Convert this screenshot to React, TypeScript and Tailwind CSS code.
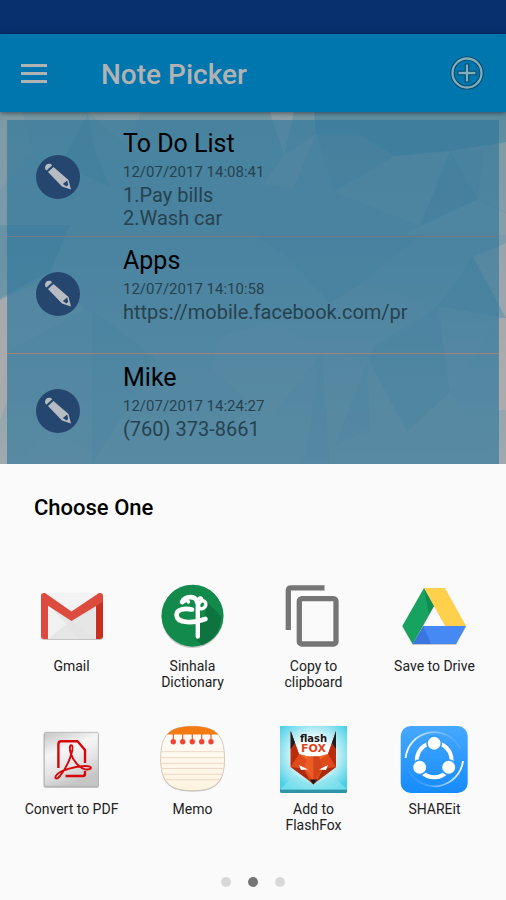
import type { ReactNode } from "react";

const notes = [
  { title: "To Do List", date: "12/07/2017 14:08:41", lines: ["1.Pay bills", "2.Wash car"] },
  { title: "Apps", date: "12/07/2017 14:10:58", lines: ["https://mobile.facebook.com/pr"] },
  { title: "Mike", date: "12/07/2017 14:24:27", lines: ["(760) 373-8661"] },
];

function Icon({ children }: { children: ReactNode }) {
  return (
    <svg viewBox="1 0 68 68" className="size-17 overflow-visible" aria-hidden="true">
      {children}
    </svg>
  );
}

function GmailIcon() {
  return (
    <Icon>
      <rect x="4" y="12" width="62" height="46" rx="3" fill="#000" opacity=".22" />
      <rect x="4" y="11" width="62" height="46" rx="3" fill="#ececec" />
      <path d="M11 57 34.5 38.5 59 57Z" fill="#e6e6e6" />
      <path d="M11 57 31 41 10 20V57Z" fill="#f1f1f1" />
      <path d="M11 22 42 57H59V20L35 39Z" fill="#e2e2e2" opacity=".55" />
      <path d="M8 11H62L34.5 30Z" fill="#f3f3f3" />
      <path d="M4 16H11V57H7Q4 57 4 54Z" fill="#de4a3f" />
      <path d="M59 16H66V54Q66 57 63 57H59Z" fill="#c9301f" />
      <path d="M4 14Q4 11 7 11H8L34.500 29.500 62 11H63Q66 11 66 14V18Q66 20 64 21L34.500 39 6 20.500Q4 19 4 17Z" fill="#dd4b3f" />
    </Icon>
  );
}

function SinhalaIcon() {
  return (
    <Icon>
      <circle cx="34.500" cy="35" r="31" fill="#000" opacity=".2" />
      <circle cx="34.500" cy="33.700" r="31" fill="#128a4b" />
      <path d="M49 20 63 34A31 31 0 0 1 44 63.500L38 57 40 42 29 42 47 36Z" fill="#0b6b3a" opacity=".7" />
      <g fill="none" stroke="#fff" strokeLinecap="round" strokeLinejoin="round">
        <path d="M24 20C27 14 38 13 39 20" strokeWidth="4.600" />
        <path d="M24.500 20.500C28 18 30 18 30.500 20" strokeWidth="3.400" />
        <path d="M34 27.500C27 26 18.500 27 18.500 33 19 42 36 41.500 47.500 37" strokeWidth="4.600" />
        <path d="M39.800 54.500V22" strokeWidth="4.400" />
        <path d="M40.500 25C40 19 45.500 17 47.500 20.500 49 25.500 44 28 41 26" strokeWidth="3.400" />
        <path d="M39.500 18.500C41 15 44 15 44 18" strokeWidth="3" />
      </g>
    </Icon>
  );
}

function CopyIcon() {
  return (
    <Icon>
      <g fill="none" stroke="#757575" strokeWidth="5.300">
        <path d="M45.500 5.800H12Q9.300 5.800 9.300 8.500V48" />
        <rect x="20.300" y="16.700" width="36.700" height="45.300" rx="2.600" />
      </g>
    </Icon>
  );
}

function DriveIcon() {
  return (
    <Icon>
      <path d="M12.700 63 2.300 45 24 7H45L66 45 56 63Z" fill="#000" opacity=".2" />
      <path d="M34 24 45.300 44H23.300Z" fill="#fafafa" />
      <path d="M24 6 34 24 12.700 62 2.300 44Z" fill="#17a260" />
      <path d="M24 6 34 24 29 32Z" fill="#0c7d48" opacity=".6" />
      <path d="M24 6H45L66 44H45.300Z" fill="#ffd04c" />
      <path d="M23.300 44H66L56 62H12.700Z" fill="#4688f4" />
      <path d="M23.300 44 31 62H12.700Z" fill="#3366cc" opacity=".55" />
    </Icon>
  );
}

function PdfIcon() {
  return (
    <Icon>
      <defs>
        <linearGradient id="pdf" x1="0" y1="0" x2=".4" y2="1">
          <stop offset="0" stopColor="#c4c4c4" />
          <stop offset=".4" stopColor="#f6f6f6" />
          <stop offset=".7" stopColor="#e4e4e4" />
          <stop offset="1" stopColor="#c6c6c6" />
        </linearGradient>
      </defs>
      <rect x="6.500" y="8" width="55.500" height="55" rx="2" fill="#000" opacity=".22" />
      <rect x="7.300" y="7.300" width="54" height="54" rx="1.500" fill="url(#pdf)" stroke="#aaa" strokeWidth=".7" />
      <g fill="none" stroke="#d8060b" strokeLinejoin="round">
        <path d="M21.400 43V19Q21.400 16.300 24 16.300H40.500L48 25V38M28.500 51H46Q48 51 48 49V46" strokeWidth="2.400" />
        <path d="M34 29C31.500 22 33.500 19 35 20.500 37 23 32 40 23 51 19 55.500 17 53 19.500 50 23 45.500 38 41 48 41 55 41 55.500 44 51 44.500 44 45 36 36 34 29Z" strokeWidth="1.900" />
      </g>
    </Icon>
  );
}

function MemoIcon() {
  const shape = "M34.500 1.300C58 1.300 66.500 10 66.500 33.500S58 65.700 34.500 65.700 2.700 57 2.700 33.500 11 1.300 34.500 1.300Z";
  return (
    <Icon>
      <defs>
        <clipPath id="memo"><path d={shape} /></clipPath>
        <linearGradient id="memoPaper" x2="0" y2="1">
          <stop stopColor="#fffdfa" />
          <stop offset="1" stopColor="#fdf3df" />
        </linearGradient>
      </defs>
      <path d={shape} transform="translate(0 1)" fill="#000" opacity=".2" />
      <path d={shape} fill="url(#memoPaper)" stroke="#c9c0b4" strokeWidth=".8" />
      <g clipPath="url(#memo)">
        <path d="M0 0H68V9.600H0Z" fill="#f47a12" />
        <path d="M0 26.700H68M0 32.700H68M0 38.300H68M0 43.500H68M0 49.300H68M0 54.700H68" stroke="#eed8c5" strokeWidth="1" />
      </g>
      {[15.3, 24.7, 34.3, 43.7, 53].map((x) => (
        <g key={x}>
          <path d={`M${x} 9V15`} stroke="#ee5c22" strokeWidth="1.200" />
          <circle cx={x} cy="16.700" r="2.700" fill="#f04438" />
        </g>
      ))}
    </Icon>
  );
}

function FoxIcon() {
  return (
    <Icon>
      <defs>
        <radialGradient id="foxSky" cx=".5" cy=".45" r=".65">
          <stop offset=".35" stopColor="#fff" />
          <stop offset="1" stopColor="#48d0e6" />
        </radialGradient>
      </defs>
      <rect x="1" y="1" width="67" height="67" rx="1.500" fill="#2e94a6" />
      <rect x="1" y="1" width="67" height="63.500" rx="1.500" fill="url(#foxSky)" />
      <path d="M1 64.500 16 50 34 61 53 50 68 64.500Z" fill="#8be4ef" opacity=".6" />
      <path d="M11.700 6 20 29 29 31.500H40L49 29 57 6V42L40 55 34.300 59.500 29 55 11.700 42Z" fill="#e04a1c" />
      <path d="M11.700 6 20 29 11.700 42ZM57 6 49 29 57 42Z" fill="#b92d0c" />
      <path d="M11.700 6 16 18 11.700 24ZM57 6 53 18 57 24Z" fill="#17202a" />
      <path d="M20 29 34.300 39 29 31.500ZM49 29 34.300 39 40 31.500Z" fill="#f26b2b" />
      <path d="M29 31.500H40L44 43 34.300 55 25 43Z" fill="#ee5c25" />
      <path d="M34.300 31.500V56L44 43 40 31.500Z" fill="#d2451a" />
      <path d="M11.700 42 25 44 31 56ZM57 42 44 44 38 56Z" fill="#a92b10" />
      <path d="M20 40 29 44.500 22 45ZM49 40 40 44.500 47 45Z" fill="#fff" />
      <path d="M30.500 54.500H38.500L34.300 59.500Z" fill="#17191c" />
      <text textAnchor="middle" fontWeight="700" fontFamily="'DejaVu Sans', sans-serif">
        <tspan x="34.500" y="16.500" fontSize="10" fill="#171717">flash</tspan>
        <tspan x="34.500" y="26.700" fontSize="11" fill="#df431c">FOX</tspan>
      </text>
    </Icon>
  );
}

function ShareIcon() {
  return (
    <Icon>
      <defs>
        <linearGradient id="share" x2="0" y2="1">
          <stop stopColor="#46a8ff" />
          <stop offset="1" stopColor="#168bfb" />
        </linearGradient>
        <linearGradient id="arcTop" x1="0" y1=".6" x2="1" y2=".3">
          <stop stopColor="#fff" />
          <stop offset="1" stopColor="#fff" stopOpacity="0" />
        </linearGradient>
        <linearGradient id="arcBottom" x1="1" y1=".3" x2="0" y2=".6">
          <stop stopColor="#fff" />
          <stop offset="1" stopColor="#fff" stopOpacity="0" />
        </linearGradient>
      </defs>
      <rect x=".700" y="1" width="67" height="67" rx="10" fill="url(#share)" />
      <path d="M5.600 33A28.800 28.800 0 0 1 60 23" fill="none" stroke="url(#arcTop)" strokeWidth="1.800" />
      <path d="M63 36A28.800 28.800 0 0 1 9 46" fill="none" stroke="url(#arcBottom)" strokeWidth="1.800" />
      <circle cx="34.200" cy="35" r="17.300" fill="none" stroke="#fff" strokeWidth="4" />
      <g fill="#fff" stroke="#2c97fc" strokeWidth="1.500">
        <circle cx="34.200" cy="18.300" r="7.200" />
        <circle cx="19.700" cy="42.300" r="7.200" />
        <circle cx="48.700" cy="42.300" r="7.200" />
      </g>
    </Icon>
  );
}

const apps = [
  { label: "Gmail", icon: <GmailIcon /> },
  { label: "Sinhala Dictionary", icon: <SinhalaIcon /> },
  { label: "Copy to clipboard", icon: <CopyIcon /> },
  { label: "Save to Drive", icon: <DriveIcon /> },
  { label: "Convert to PDF", icon: <PdfIcon /> },
  { label: "Memo", icon: <MemoIcon /> },
  { label: "Add to FlashFox", icon: <FoxIcon /> },
  { label: "SHAREit", icon: <ShareIcon /> },
];

// Faceted wallpaper behind the note list
function Wallpaper() {
  return (
    <svg
      viewBox="0 112 506 352"
      preserveAspectRatio="none"
      className="absolute inset-0 size-full"
      aria-hidden="true"
    >
      <defs>
        <linearGradient id="wall" x2="0" y2="1">
          <stop stopColor="#7497a3" />
          <stop offset=".4" stopColor="#7c9bab" />
          <stop offset=".7" stopColor="#8fa3ac" />
          <stop offset="1" stopColor="#9eaaae" />
        </linearGradient>
      </defs>
      <path d="M0 112H506V464H0Z" fill="url(#wall)" />
      <g fill="#b4aeae">
        <path d="M88 112H140L132 150Z" opacity=".2" />
        <path d="M270 112H294L284 155Z" opacity=".4" />
        <path d="M316 134 283 156 264 184 293 188Z" opacity=".3" />
        <path d="M395 156 450 151 420 226 334 192Z" opacity=".15" />
        <path d="M450 151 506 142V212L478 199Z" opacity=".15" />
        <path d="M420 226 478 199 506 214V235H405Z" opacity=".2" />
        <path d="M473 257 506 243V318Z" opacity=".5" />
        <path d="M0 300 55 275 85 310 10 350 0 390Z" opacity=".3" />
        <path d="M0 300 8 296V400L0 420Z" opacity=".6" />
        <path d="M221 337 275 320 322 353 268 420 211 368Z" opacity=".2" />
        <path d="M275 320 330 303 361 284 438 306 370 355 322 353Z" opacity=".12" />
        <path d="M322 353 368 358 407 432 450 392 500 464H303Z" opacity=".15" />
        <path d="M438 306 500 318 450 392Z" opacity=".12" />
        <path d="M498 318H506V410H498Z" opacity=".7" />
        <path d="M20 464 50 430 92 453 92 464Z" opacity=".2" />
        <path d="M0 112H22L34 150 0 190Z" opacity=".15" />
      </g>
      <g fill="#3f7f9b">
        <path d="M314 112H506V142L450 151 395 156 358 134H316Z" opacity=".4" />
        <path d="M316 134H358L395 156 334 192Z" opacity=".12" />
        <path d="M88 114 60 165 110 187 95 150Z" opacity=".22" />
        <path d="M450 151 420 226 478 199 483 150Z" opacity=".16" />
        <path d="M0 225H70L50 272 0 298Z" opacity=".3" />
        <path d="M253 235H420L361 284 330 303 286 255Z" opacity=".12" />
        <path d="M438 306 450 392 407 432 368 358 375 345Z" opacity=".12" />
        <path d="M92 310 155 358 120 420 92 464Z" opacity=".1" />
        <path d="M322 355 303 464H330ZM368 360 335 445 370 430Z" opacity=".1" />
        <path d="M473 257 506 318 438 306Z" opacity=".15" />
      </g>
    </svg>
  );
}

function PencilBadge() {
  return (
    <svg viewBox="0 0 44 44" className="size-11" aria-hidden="true">
      <circle cx="22" cy="22" r="22" fill="#25476f" />
      <path d="M9 13C9 9.500 12 8 15 9L16 10.500 10.500 15.500Q9 14.500 9 13Z" fill="#b7bcc2" />
      <path d="M12 17 17.500 12 32.500 25 35 34.500 26 31.500Z" fill="#b7bcc2" />
      <path d="M26.800 29 31.200 25.500 32.200 30 30.500 31.500Z" fill="#25476f" />
    </svg>
  );
}

export default function App() {
  return (
    <div className="flex h-screen flex-col overflow-hidden bg-neutral-50 font-[Roboto,sans-serif]">
      <div className="h-[34px] shrink-0 bg-[#08306f]" />
      <header className="z-10 flex h-[78px] shrink-0 items-center bg-[#0076ae] px-[21px] text-[#b2b2b2] shadow-[0_1px_5px_rgba(0,0,0,0.5)]">
        <button type="button" aria-label="Menu" className="flex w-[26px] flex-col gap-[5px]">
          <span className="h-[3px] bg-current" />
          <span className="h-[3px] bg-current" />
          <span className="h-[3px] bg-current" />
        </button>
        <h1 className="ml-[54px] flex-1 pt-1 text-[28px] leading-8 font-medium">Note Picker</h1>
        <button type="button" aria-label="Add note">
          <svg viewBox="0 0 34 34" className="size-9" fill="none" aria-hidden="true">
            <circle cx="17" cy="17" r="13.700" stroke="#074567" strokeWidth="4" />
            <circle cx="17" cy="17" r="13.700" stroke="#82adbd" strokeWidth="2.200" />
            <path d="M17 8V26M8 17H26" stroke="#074567" strokeWidth="4.200" />
            <path d="M17 9V25M9 17H25" stroke="#82adbd" strokeWidth="2.200" />
          </svg>
        </button>
      </header>

      <main className="relative min-h-0 flex-1 overflow-hidden px-[7px] pt-2">
        <Wallpaper />
        <ul className="relative bg-[#29759b]/60">
          {notes.map((note) => (
            <li key={note.title} className="flex h-[117px] items-start border-b border-[#727c82] pl-[29px] even:border-[#a08375]">
              <div className="mt-[35px] mr-[43px]">
                <PencilBadge />
              </div>
              <div className="min-w-0 flex-1 pt-2 text-[#26424f]">
                <h2 className="text-[25px] leading-8 text-black">{note.title}</h2>
                <p className="text-[15px] leading-6">{note.date}</p>
                {note.lines.map((line) => (
                  <p key={line} className="truncate text-xl leading-[23px]">{line}</p>
                ))}
              </div>
            </li>
          ))}
        </ul>
      </main>

      <section className="shrink-0 bg-neutral-50 px-[11px] pt-7 pb-[13px] text-[#212121]">
        <h2 className="pl-[23px] text-[22px] leading-8 font-medium text-black">Choose One</h2>
        <div className="mt-[58px] grid grid-cols-4 gap-y-[35px]">
          {apps.map((app) => (
            <button key={app.label} type="button" className="flex min-h-[108px] flex-col items-center">
              {app.icon}
              <span className="mt-2 max-w-[100px] text-[14px] leading-4">{app.label}</span>
            </button>
          ))}
        </div>
        <div className="mt-11 flex justify-center gap-[17px]">
          <button type="button" aria-label="Page 1" className="size-2.5 rounded-full bg-[#d8d8d8]" />
          <button type="button" aria-label="Page 2" className="size-2.5 rounded-full bg-[#757575]" />
          <button type="button" aria-label="Page 3" className="size-2.5 rounded-full bg-[#d8d8d8]" />
        </div>
      </section>
    </div>
  );
}
